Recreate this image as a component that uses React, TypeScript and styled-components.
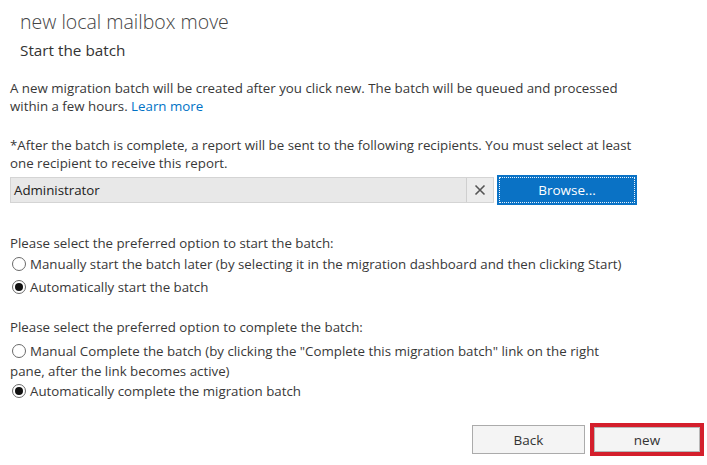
import React from "react";
import styled, { createGlobalStyle } from "styled-components";

const FONT = `"Segoe UI", "Open Sans", "Noto Sans", Arial, sans-serif`;

const Global = createGlobalStyle`
  html, body { margin: 0; padding: 0; background: #ffffff; }
  body { font-family: ${FONT}; color: #383838; }
  * { box-sizing: border-box; }
`;

const Page = styled.div`
  width: 707px;
  height: 465px;
  padding: 0 10px;
  display: flex;
  flex-direction: column;
  font-size: 13.3px;
  overflow: hidden;
`;

const Header = styled.header`
  padding-left: 10px;
  display: flex;
  flex-direction: column;
`;

const Title = styled.h1`
  margin: 9px 0 0;
  font-size: 19.5px;
  line-height: 26px;
  font-weight: 300;
  color: #444444;
`;

const Subtitle = styled.h2`
  margin: 5px 0 0;
  font-size: 15.3px;
  line-height: 20px;
  font-weight: 400;
  color: #333333;
`;

const Para = styled.p<{ $gap: number }>`
  margin: ${(p) => p.$gap}px 0 0;
  line-height: 18px;
  white-space: nowrap;
`;

const Link = styled.a`
  color: #0072c6;
  text-decoration: none;
`;

const PickerRow = styled.div`
  margin-top: 3px;
  display: flex;
  align-items: center;
  gap: 3px;
  height: 30px;
`;

const Field = styled.div`
  width: 484px;
  height: 26px;
  display: flex;
  border: 1px solid #d4d4d4;
  background: #e8e8e8;
`;

const FieldText = styled.div`
  flex: 1;
  padding-left: 3px;
  line-height: 24px;
  color: #222222;
`;

const ClearButton = styled.button`
  width: 27px;
  height: 24px;
  border: none;
  border-left: 1px solid #cfcfcf;
  background: #ececec;
  padding: 0;
  display: flex;
  align-items: center;
  justify-content: center;
`;

const BrowseButton = styled.button`
  position: relative;
  width: 140px;
  height: 30px;
  border: none;
  background: #0a72c5;
  color: #ffffff;
  font-family: ${FONT};
  font-size: 13.5px;
  padding: 0;
  &::after {
    content: "";
    position: absolute;
    inset: 2px;
    border: 1px dotted #e6f0fa;
  }
`;

const Section = styled.fieldset<{ $gap: number }>`
  margin: ${(p) => p.$gap}px 0 0;
  padding: 0;
  border: none;
  display: flex;
  flex-direction: column;
`;

const Legend = styled.div`
  line-height: 18px;
`;

const Option = styled.label<{ $gap: number }>`
  margin-top: ${(p) => p.$gap}px;
  display: flex;
  align-items: flex-start;
  gap: 4px;
  line-height: 20px;
  padding-left: 2px;
`;

const Continuation = styled.div`
  line-height: 20px;
  white-space: nowrap;
`;

const Radio = styled.span<{ $on?: boolean }>`
  flex: none;
  margin-top: 3px;
  width: 14px;
  height: 14px;
  border-radius: 50%;
  border: 1px solid #6a6a6a;
  background: #ffffff;
  display: flex;
  align-items: center;
  justify-content: center;
  &::after {
    content: "";
    width: 8px;
    height: 8px;
    border-radius: 50%;
    background: #111111;
    display: ${(p) => (p.$on ? "block" : "none")};
  }
`;

const OptionText = styled.span`
  white-space: nowrap;
`;

const Footer = styled.div`
  margin-top: auto;
  margin-bottom: 9px;
  margin-right: -7px;
  display: flex;
  justify-content: flex-end;
  align-items: center;
  gap: 5px;
`;

const ActionButton = styled.button<{ $focus?: boolean }>`
  width: ${(p) => (p.$focus ? 114 : 113)}px;
  height: ${(p) => (p.$focus ? 33 : 29)}px;
  background: #f4f4f4;
  border: 1px solid #ababab;
  box-shadow: ${(p) => (p.$focus ? "0 0 0 3px #d41f2c inset, 0 0 0 4px #b8b8b8 inset" : "none")};
  font-family: ${FONT};
  font-size: 13.5px;
  color: #333333;
  padding: 0;
  ${(p) => (p.$focus ? "border-color: #d41f2c;" : "")}
`;

const CloseIcon = () => (
  <svg width="12" height="12" viewBox="0 0 12 12">
    <path d="M1.5 1.5 L10.5 10.5 M10.5 1.5 L1.5 10.5" stroke="#555" strokeWidth="1.6" />
  </svg>
);

export default function App() {
  return (
    <>
      <Global />
      <Page>
        <Header>
          <Title>new local mailbox move</Title>
          <Subtitle>Start the batch</Subtitle>
        </Header>

        <Para $gap={19}>
          A new migration batch will be created after you click new. The batch will be queued and processed
          <br />
          within a few hours. <Link href="#">Learn more</Link>
        </Para>

        <Para $gap={21}>
          *After the batch is complete, a report will be sent to the following recipients. You must select at least
          <br />
          one recipient to receive this report.
        </Para>

        <PickerRow>
          <Field>
            <FieldText>Administrator</FieldText>
            <ClearButton aria-label="clear">
              <CloseIcon />
            </ClearButton>
          </Field>
          <BrowseButton>Browse...</BrowseButton>
        </PickerRow>

        <Section $gap={29}>
          <Legend>Please select the preferred option to start the batch:</Legend>
          <Option $gap={2}>
            <Radio />
            <OptionText>
              Manually start the batch later (by selecting it in the migration dashboard and then clicking Start)
            </OptionText>
          </Option>
          <Option $gap={3}>
            <Radio $on />
            <OptionText>Automatically start the batch</OptionText>
          </Option>
        </Section>

        <Section $gap={21}>
          <Legend>Please select the preferred option to complete the batch:</Legend>
          <Option $gap={5}>
            <Radio />
            <OptionText>
              Manual Complete the batch (by clicking the "Complete this migration batch" link on the right
            </OptionText>
          </Option>
          <Continuation>pane, after the link becomes active)</Continuation>
          <Option $gap={0}>
            <Radio $on />
            <OptionText>Automatically complete the migration batch</OptionText>
          </Option>
        </Section>

        <Footer>
          <ActionButton>Back</ActionButton>
          <ActionButton $focus>new</ActionButton>
        </Footer>
      </Page>
    </>
  );
}
